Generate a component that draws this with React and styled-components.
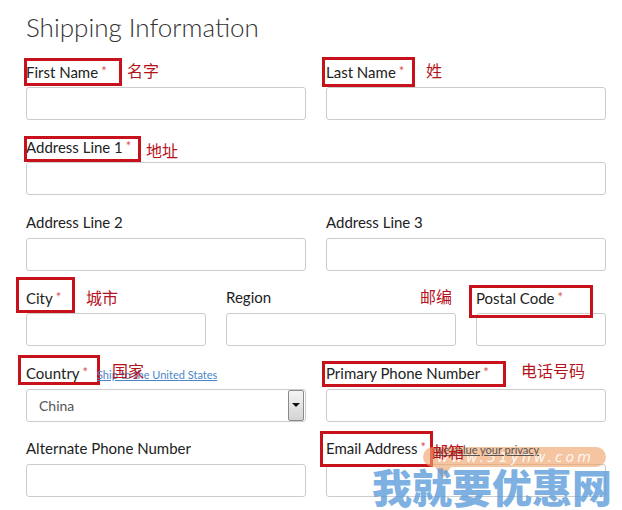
import React from "react";
import styled, { createGlobalStyle } from "styled-components";

const Global = createGlobalStyle`
  body {
    margin: 0;
    background: #fff;
    font-family: Lato, "Noto Sans", sans-serif;
  }
`;

const Page = styled.div`
  position: relative;
  width: 622px;
  height: 510px;
  overflow: hidden;
  padding: 12px 0 0 26px;
  box-sizing: border-box;
`;

const Title = styled.h2`
  margin: 0 0 17px;
  font-weight: 300;
  font-size: 26px;
  line-height: 30px;
  color: #333;
`;

const Form = styled.div`
  display: flex;
  flex-direction: column;
  gap: 14.4px;
  width: 580px;
`;

const Row = styled.div`
  display: grid;
  grid-template-columns: ${(p) => p.$cols};
  column-gap: 20px;
`;

const Field = styled.div`
  display: flex;
  flex-direction: column;
  gap: 4px;
`;

const LabelLine = styled.div`
  position: relative;
  height: 24px;
  display: flex;
  align-items: center;
`;

const Label = styled.span`
  position: relative;
  font-size: 15px;
  line-height: 18px;
  color: #222;
  white-space: nowrap;
  &::after {
    content: "";
    display: ${(p) => (p.$box ? "block" : "none")};
    position: absolute;
    top: ${(p) => p.$box?.[0]}px;
    right: ${(p) => p.$box?.[1]}px;
    bottom: ${(p) => p.$box?.[2]}px;
    left: ${(p) => p.$box?.[3]}px;
    border: 3px solid #c8121b;
  }
`;

const Star = styled.span`
  color: #d9534f;
  font-size: 13px;
  margin-left: 3px;
  vertical-align: 2px;
`;

const Note = styled.span`
  position: absolute;
  z-index: 2;
  left: ${(p) => p.$x}px;
  top: ${(p) => p.$y}px;
  font-family: "Noto Sans CJK SC", sans-serif;
  font-size: 16px;
  color: #b5121b;
  white-space: nowrap;
`;

const Hint = styled.span`
  position: absolute;
  z-index: 1;
  left: ${(p) => p.$x}px;
  top: 7px;
  font-size: 11px;
  color: ${(p) => p.$color};
  text-decoration: underline;
  white-space: nowrap;
`;

const Input = styled.div`
  height: 33px;
  box-sizing: border-box;
  border: 1px solid #ccc;
  border-radius: 3px;
  background: #fff;
`;

const Select = styled(Input)`
  display: flex;
  align-items: center;
  justify-content: space-between;
  padding-left: 12px;
  font-size: 14px;
  color: #555;
`;

const Arrow = styled.div`
  width: 16px;
  height: 31px;
  margin-right: 1px;
  box-sizing: border-box;
  border: 1px solid #8a8a8a;
  border-radius: 2px;
  background: linear-gradient(#f4f4f4, #d4d4d4);
  display: flex;
  align-items: center;
  justify-content: center;
  &::before {
    content: "";
    border-left: 4px solid transparent;
    border-right: 4px solid transparent;
    border-top: 4px solid #111;
  }
`;

const Stamp = styled.div`
  position: absolute;
  left: 372px;
  top: 446px;
  width: 244px;
  height: 62px;
  pointer-events: none;
`;

const Pill = styled.div`
  position: absolute;
  left: 51px;
  top: 1px;
  width: 183px;
  height: 20px;
  border-radius: 10px;
  background: rgba(240, 165, 110, 0.65);
  color: rgba(255, 255, 255, 0.9);
  font-family: "DejaVu Sans", sans-serif;
  font-style: italic;
  font-size: 14px;
  letter-spacing: 3px;
  line-height: 20px;
  padding-left: 14px;
  box-sizing: border-box;
  &::after {
    content: "";
    position: absolute;
    left: 12px;
    bottom: -11px;
    border-left: 8px solid transparent;
    border-right: 8px solid transparent;
    border-top: 11px solid rgba(240, 165, 110, 0.65);
  }
`;

const Brand = styled.div`
  position: absolute;
  left: 0;
  top: 20px;
  font-family: "Noto Sans CJK SC", sans-serif;
  font-weight: 900;
  font-size: 40px;
  line-height: 40px;
  color: rgba(90, 155, 218, 0.8);
  white-space: nowrap;
`;

const FieldBlock = ({ label, required, box, children, extra }) => (
  <Field>
    <LabelLine>
      <Label $box={box}>
        {label}
        {required && <Star>*</Star>}
      </Label>
      {extra}
    </LabelLine>
    {children}
  </Field>
);

export default function App() {
  return (
    <Page>
      <Global />
      <Title>Shipping Information</Title>
      <Form>
        <Row $cols="280px 280px">
          <FieldBlock label="First Name" required box={[-4, -15, -5, -2]} extra={<Note $x={101} $y={-1}>名字</Note>}>
            <Input />
          </FieldBlock>
          <FieldBlock label="Last Name" required box={[-5, -11, -6, -4]} extra={<Note $x={100} $y={-1}>姓</Note>}>
            <Input />
          </FieldBlock>
        </Row>
        <Row $cols="580px">
          <FieldBlock label="Address Line 1" required box={[-1, -10, -6, -2]} extra={<Note $x={120} $y={4}>地址</Note>}>
            <Input />
          </FieldBlock>
        </Row>
        <Row $cols="280px 280px">
          <FieldBlock label="Address Line 2">
            <Input />
          </FieldBlock>
          <FieldBlock label="Address Line 3">
            <Input />
          </FieldBlock>
        </Row>
        <Row $cols="180px 230px 130px">
          <FieldBlock label="City" required box={[-11, -14, -6, -10]} extra={<Note $x={60} $y={0}>城市</Note>}>
            <Input />
          </FieldBlock>
          <FieldBlock label="Region" extra={<Note $x={194} $y={-1}>邮编</Note>}>
            <Input />
          </FieldBlock>
          <FieldBlock label="Postal Code" required box={[-3, -30, -11, -7]}>
            <Input />
          </FieldBlock>
        </Row>
        <Row $cols="280px 280px">
          <FieldBlock
            label="Country"
            required
            box={[-8, -12, -3, -8]}
            extra={
              <>
                <Hint $x={71} $color="#4a86c8">Ship to the United States</Hint>
                <Note $x={86} $y={-3}>国家</Note>
              </>
            }
          >
            <Select>
              China
              <Arrow />
            </Select>
          </FieldBlock>
          <FieldBlock label="Primary Phone Number" required box={[-2, -17, -5, -4]} extra={<Note $x={195} $y={-3}>电话号码</Note>}>
            <Input />
          </FieldBlock>
        </Row>
        <Row $cols="280px 280px">
          <FieldBlock label="Alternate Phone Number">
            <Input />
          </FieldBlock>
          <FieldBlock
            label="Email Address"
            required
            box={[-7, -7, -10, -6]}
            extra={
              <>
                <Hint $x={109} $color="#555">we value your privacy</Hint>
                <Note $x={106} $y={3}>邮箱</Note>
              </>
            }
          >
            <Input />
          </FieldBlock>
        </Row>
      </Form>
      <Stamp>
        <Pill>www.51yhw.com</Pill>
        <Brand>我就要优惠网</Brand>
      </Stamp>
    </Page>
  );
}
